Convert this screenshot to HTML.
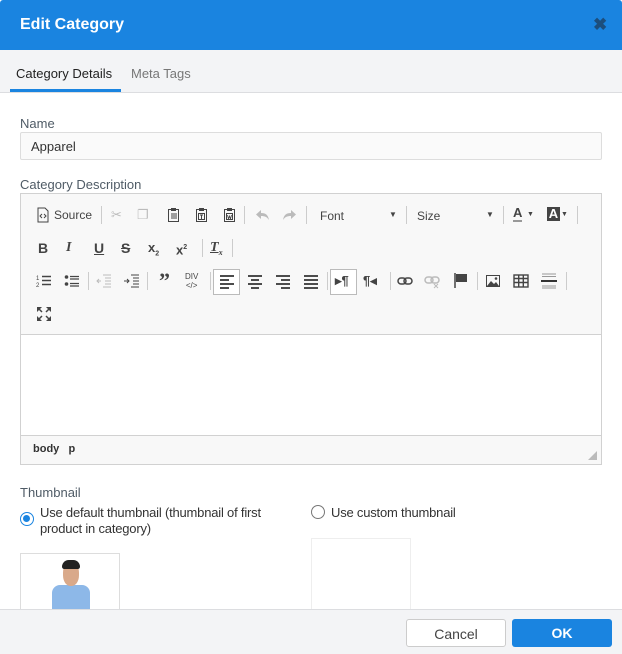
<!DOCTYPE html>
<html><head><meta charset="utf-8"><style>
*{box-sizing:border-box;margin:0;padding:0}
body{width:622px;height:654px;overflow:hidden;background:#fff;font-family:"Liberation Sans",Arial,sans-serif;position:relative}
.a{position:absolute}
.hdr{left:0;top:0;width:622px;height:50px;background:#1a84e0;border-radius:3px 3px 0 0}
.hdr .t{left:20px;top:16px;color:#fff;font-weight:bold;font-size:16px}
.tabs{left:0;top:50px;width:622px;height:43px;background:#f3f4f6;border-bottom:1px solid #dcdde0}
.lbl{color:#4f5b66;font-size:13px}
.ic{position:absolute;font-size:13px;color:#444;text-align:center;line-height:16px}
svg.i{position:absolute;width:16px;height:16px}
.sep{position:absolute;width:1px;height:18px;background:#ccc}
.g{color:#bbb}
.btn{border-radius:3px;font-size:14px;text-align:center;line-height:28px}
</style></head><body>
<div class="a hdr"><div class="a t">Edit Category</div>
<div class="a" style="left:593px;top:15px;color:#1c4e7d;font-size:17px;font-weight:bold">✖</div></div>
<div class="a tabs">
<div class="a" style="left:16px;top:16px;font-size:13px;color:#222">Category Details</div>
<div class="a" style="left:131px;top:16px;font-size:13px;color:#777">Meta Tags</div>
<div class="a" style="left:10px;top:39px;width:111px;height:3px;background:#1a84e0"></div>
</div>
<div class="a lbl" style="left:20px;top:116px">Name</div>
<div class="a" style="left:20px;top:132px;width:582px;height:28px;border:1px solid #ddd;background:#fafafa;border-radius:2px;font-size:13px;color:#333;padding:6px 10px">Apparel</div>
<div class="a lbl" style="left:20px;top:177px">Category Description</div>
<div class="a" style="left:20px;top:193px;width:582px;height:272px;border:1px solid #d1d1d1;background:#f8f8f8">
 <div class="a" style="left:0;top:140px;width:580px;height:102px;background:#fff;border-top:1px solid #d1d1d1;border-bottom:1px solid #d1d1d1"></div>
 <div class="a" style="left:12px;top:249px;font-size:11px;font-weight:bold;color:#333">body &nbsp; p</div>
 <div class="a" style="right:4px;bottom:4px;width:0;height:0;border-left:9px solid transparent;border-bottom:9px solid #bbb"></div>
 <!-- row1 -->
 <svg class="i" style="left:14px;top:13px" viewBox="0 0 16 16"><path d="M3 1h7l3 3v11H3z" fill="none" stroke="#444"/><path d="M7 7l-2 2 2 2M9 7l2 2-2 2" fill="none" stroke="#444"/></svg>
 <div class="ic" style="left:33px;top:13px;font-size:12px">Source</div>
 <div class="sep" style="left:80px;top:12px"></div>
 <div class="ic g" style="left:90px;top:13px">✂</div>
 <div class="ic g" style="left:116px;top:13px">❐</div>
 <svg class="i" style="left:145px;top:13px" viewBox="0 0 16 16"><rect x="2.5" y="2.5" width="10" height="12" fill="none" stroke="#444"/><rect x="5" y="1" width="5" height="3" fill="#444"/><path d="M5 7h6M5 9h6M5 11h6" stroke="#444"/></svg>
 <svg class="i" style="left:173px;top:13px" viewBox="0 0 16 16"><rect x="2.5" y="2.5" width="10" height="12" fill="none" stroke="#444"/><rect x="5" y="1" width="5" height="3" fill="#444"/><rect x="4.5" y="6.5" width="6" height="6" fill="none" stroke="#444"/><path d="M6 8h3M7.5 8v4" stroke="#444"/></svg>
 <svg class="i" style="left:201px;top:13px" viewBox="0 0 16 16"><rect x="2.5" y="2.5" width="10" height="12" fill="none" stroke="#444"/><rect x="5" y="1" width="5" height="3" fill="#444"/><rect x="4.5" y="6.5" width="6" height="6" fill="none" stroke="#444"/><path d="M5.5 8l1 4 1-3 1 3 1-4" fill="none" stroke="#444" stroke-width=".8"/></svg>
 <div class="sep" style="left:223px;top:12px"></div>
 <svg class="i" style="left:234px;top:13px" viewBox="0 0 16 16"><path d="M6 3L1 7.5 6 12V9c4 0 6 1 8 4-1-5-3-7-8-7z" fill="#bbb"/></svg>
 <svg class="i" style="left:260px;top:13px" viewBox="0 0 16 16"><path d="M10 3l5 4.5-5 4.5V9c-4 0-6 1-8 4 1-5 3-7 8-7z" fill="#bbb"/></svg>
 <div class="sep" style="left:285px;top:12px"></div>
 <div class="ic" style="left:299px;top:14px;font-size:12px">Font</div>
 <div class="ic" style="left:368px;top:13px;font-size:8px">▼</div>
 <div class="sep" style="left:385px;top:12px"></div>
 <div class="ic" style="left:396px;top:14px;font-size:12px">Size</div>
 <div class="ic" style="left:465px;top:13px;font-size:8px">▼</div>
 <div class="sep" style="left:482px;top:12px"></div>
 <div class="ic" style="left:492px;top:12px;font-weight:bold;border-bottom:2px solid #999;line-height:14px">A</div>
 <div class="ic" style="left:506px;top:13px;font-size:7px">▼</div>
 <div class="ic" style="left:526px;top:13px;background:#444;color:#fff;font-weight:bold;width:13px;line-height:14px">A</div>
 <div class="ic" style="left:540px;top:13px;font-size:7px">▼</div>
 <div class="sep" style="left:556px;top:12px"></div>
 <!-- row2 -->
 <div class="ic" style="left:17px;top:46px;font-weight:bold;font-size:14px">B</div>
 <div class="ic" style="left:45px;top:46px;font-style:italic;font-weight:bold;font-family:'Liberation Serif';font-size:14px">I</div>
 <div class="ic" style="left:73px;top:46px;text-decoration:underline;font-weight:bold;font-size:14px">U</div>
 <div class="ic" style="left:100px;top:46px;text-decoration:line-through;font-weight:bold;font-size:14px">S</div>
 <div class="ic" style="left:127px;top:46px;font-weight:bold">x<sub style="font-size:7px">2</sub></div>
 <div class="ic" style="left:155px;top:46px;font-weight:bold">x<sup style="font-size:7px">2</sup></div>
 <div class="sep" style="left:181px;top:45px"></div>
 <div class="ic" style="left:189px;top:46px;font-style:italic;font-weight:bold;text-decoration:underline;font-family:'Liberation Serif';font-size:14px">T<sub style="font-size:8px">x</sub></div>
 <div class="sep" style="left:211px;top:45px"></div>
 <!-- row3 -->
 <svg class="i" style="left:15px;top:79px" viewBox="0 0 16 16"><path d="M6 3.5h9M6 7.5h9M6 11.5h9" stroke="#444" stroke-width="1.5"/><text x="0" y="7" font-size="6" fill="#444">1</text><text x="0" y="14" font-size="6" fill="#444">2</text></svg>
 <svg class="i" style="left:43px;top:79px" viewBox="0 0 16 16"><circle cx="2.5" cy="4" r="1.8" fill="#444"/><circle cx="2.5" cy="11" r="1.8" fill="#444"/><path d="M6 3.5h9M6 6h9M6 10.5h9M6 13h9" stroke="#444" stroke-width="1.3"/></svg>
 <div class="sep" style="left:67px;top:78px"></div>
 <svg class="i" style="left:75px;top:79px" viewBox="0 0 16 16"><path d="M7 2h8M9 5h6M9 8h6M9 11h6M7 14h8" stroke="#bbb"/><path d="M5 8H1M3 6L1 8l2 2" stroke="#bbb" fill="none"/></svg>
 <svg class="i" style="left:103px;top:79px" viewBox="0 0 16 16"><path d="M7 2h8M9 5h6M9 8h6M9 11h6M7 14h8" stroke="#444"/><path d="M0 8h5M3 6l2 2-2 2" stroke="#444" fill="none"/></svg>
 <div class="sep" style="left:126px;top:78px"></div>
 <div class="ic" style="left:138px;top:76px;font-weight:bold;font-size:22px;font-family:'Liberation Serif';line-height:22px">”</div>
 <div class="ic" style="left:164px;top:78px;font-size:8px;line-height:9px">DIV<br>&lt;/&gt;</div>
 <div class="sep" style="left:189px;top:78px"></div>
 <div class="a" style="left:192px;top:75px;width:27px;height:26px;border:1px solid #bbb;background:#fff"></div>
 <svg class="i" style="left:198px;top:80px" viewBox="0 0 16 16"><path d="M1 2h14M1 6h9M1 10h14M1 14h9" stroke="#333" stroke-width="1.8"/></svg>
 <svg class="i" style="left:226px;top:80px" viewBox="0 0 16 16"><path d="M1 2h14M4 6h8M1 10h14M4 14h8" stroke="#333" stroke-width="1.8"/></svg>
 <svg class="i" style="left:254px;top:80px" viewBox="0 0 16 16"><path d="M1 2h14M6 6h9M1 10h14M6 14h9" stroke="#333" stroke-width="1.8"/></svg>
 <svg class="i" style="left:282px;top:80px" viewBox="0 0 16 16"><path d="M1 2h14M1 6h14M1 10h14M1 14h14" stroke="#333" stroke-width="1.8"/></svg>
 <div class="sep" style="left:306px;top:78px"></div>
 <div class="a" style="left:309px;top:75px;width:27px;height:26px;border:1px solid #bbb;background:#fff"></div>
 <div class="ic" style="left:314px;top:79px;font-weight:bold">▸¶</div>
 <div class="ic" style="left:342px;top:79px;font-weight:bold">¶◂</div>
 <div class="sep" style="left:369px;top:78px"></div>
 <svg class="i" style="left:376px;top:79px" viewBox="0 0 16 16"><rect x="1" y="5" width="8" height="6" rx="3" fill="none" stroke="#444" stroke-width="1.5"/><rect x="7" y="5" width="8" height="6" rx="3" fill="none" stroke="#444" stroke-width="1.5"/></svg>
 <svg class="i" style="left:403px;top:79px" viewBox="0 0 16 16"><rect x="1" y="4" width="8" height="6" rx="3" fill="none" stroke="#bbb" stroke-width="1.5"/><rect x="7" y="4" width="8" height="6" rx="3" fill="none" stroke="#bbb" stroke-width="1.5"/><path d="M10 11l4 4M14 11l-4 4" stroke="#bbb"/></svg>
 <svg class="i" style="left:432px;top:78px" viewBox="0 0 16 16"><path d="M2 1v15" stroke="#444" stroke-width="1.5"/><path d="M3 2h11v8H3z" fill="#444"/></svg>
 <div class="sep" style="left:456px;top:78px"></div>
 <svg class="i" style="left:464px;top:79px" viewBox="0 0 16 16"><rect x="1.5" y="2.5" width="13" height="11" fill="none" stroke="#444"/><path d="M2 13l4-5 3 3 2-2 3 4z" fill="#444"/><circle cx="11" cy="5.5" r="1.3" fill="#444"/></svg>
 <svg class="i" style="left:492px;top:79px" viewBox="0 0 16 16"><rect x="1" y="2" width="14" height="12" fill="none" stroke="#444" stroke-width="1.4"/><path d="M1 5.5h14M1 9.5h14M5.7 2v12M10.3 2v12" stroke="#444" stroke-width="1.4"/></svg>
 <svg class="i" style="left:520px;top:79px" viewBox="0 0 16 16"><path d="M1 1h14M1 3.5h14M1 13h14M1 15h14" stroke="#999"/><path d="M0 8h16" stroke="#333" stroke-width="2"/></svg>
 <div class="sep" style="left:545px;top:78px"></div>
 <svg class="i" style="left:15px;top:112px" viewBox="0 0 16 16"><path d="M1 1h5L1 6zM15 1h-5l5 5zM1 15h5L1 10zM15 15h-5l5-5z" fill="#444"/><path d="M2 2l4 4M14 2l-4 4M2 14l4-4M14 14l-4-4" stroke="#444" stroke-width="1.5"/></svg>
</div>
<div class="a lbl" style="left:20px;top:485px">Thumbnail</div>
<div class="a" style="left:20px;top:512px;width:14px;height:14px;border:1.5px solid #1a84e0;border-radius:50%"><div class="a" style="left:2px;top:2px;width:7px;height:7px;border-radius:50%;background:#1a84e0"></div></div>
<div class="a" style="left:40px;top:505px;font-size:13px;color:#333;line-height:16px;width:250px;letter-spacing:-0.2px">Use default thumbnail (thumbnail of first product in category)</div>
<div class="a" style="left:311px;top:505px;width:14px;height:14px;border:1px solid #777;border-radius:50%"></div>
<div class="a" style="left:331px;top:505px;font-size:13px;color:#333;line-height:16px;letter-spacing:-0.2px">Use custom thumbnail</div>
<div class="a" style="left:20px;top:553px;width:100px;height:70px;border:1px solid #ddd;overflow:hidden">
 <div class="a" style="left:31px;top:31px;width:38px;height:40px;background:#8db8e8;border-radius:8px 8px 0 0"></div>
 <div class="a" style="left:42px;top:8px;width:16px;height:24px;background:#d9a98a;border-radius:45%"></div>
 <div class="a" style="left:41px;top:6px;width:18px;height:9px;background:#222;border-radius:9px 9px 3px 3px"></div>
</div>
<div class="a" style="left:311px;top:538px;width:100px;height:80px;border:1px solid #eee"></div>
<div class="a" style="left:0;top:609px;width:622px;height:45px;background:#f3f4f6;border-top:1px solid #dcdde0">
 <div class="a btn" style="left:406px;top:9px;width:100px;height:28px;border:1px solid #ccc;background:#fff;color:#444">Cancel</div>
 <div class="a btn" style="left:512px;top:9px;width:100px;height:28px;background:#1a84e0;color:#fff;font-weight:bold">OK</div>
</div>
</body></html>
